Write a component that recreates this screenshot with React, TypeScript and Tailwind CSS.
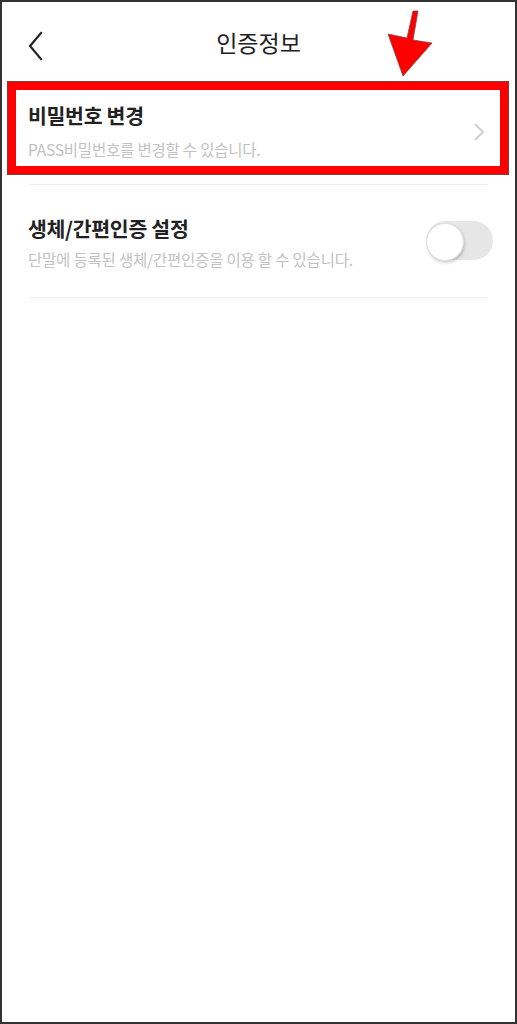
import React from "react";

export default function App() {
  const font = { fontFamily: '"Noto Sans CJK KR", "Noto Sans", sans-serif' };
  return (
    <div
      className="relative w-[517px] h-[1024px] bg-white border-2 border-[#333] overflow-hidden"
      style={font}
    >
      {/* Header */}
      <div className="relative flex items-center justify-center h-[82px]">
        <button className="absolute left-[24px] top-[28px] w-[20px] h-[32px] flex items-center justify-center">
          <svg width="16" height="30" viewBox="0 0 16 30" fill="none">
            <path d="M13 2 L2 15 L13 28" stroke="#222" strokeWidth="2.2" strokeLinecap="square" />
          </svg>
        </button>
        <h1 className="text-[23px] leading-none text-[#222] font-normal -mt-[1px]">인증정보</h1>
      </div>

      {/* Row 1 */}
      <div className="flex items-start justify-between pl-[26px] pr-[26px] pt-[17px] h-[100px]">
        <div className="flex flex-col">
          <div className="text-[20.5px] font-bold text-[#222] leading-[28px] tracking-[-0.3px]">비밀번호 변경</div>
          <div className="text-[15.5px] text-[#c2c2c2] leading-[22px] mt-[9px] tracking-[-0.2px]">PASS비밀번호를 변경할 수 있습니다.</div>
        </div>
        <svg width="12" height="20" viewBox="0 0 12 20" className="mr-[4px] mt-[21px]">
          <path d="M2 2 L10 10 L2 18" stroke="#cfcfcf" strokeWidth="2" fill="none" />
        </svg>
      </div>
      <div className="mx-[27px] border-t border-[#eeeeee]" />

      {/* Row 2 */}
      <div className="flex items-start justify-between pl-[26px] pr-[22px] pt-[29px] h-[112px]">
        <div className="flex flex-col">
          <div className="text-[20.5px] font-bold text-[#222] leading-[28px] tracking-[-0.3px]">생체/간편인증 설정</div>
          <div className="text-[15.5px] text-[#c2c2c2] leading-[22px] mt-[6px] tracking-[-0.2px]">단말에 등록된 생체/간편인증을 이용 할 수 있습니다.</div>
        </div>
        <div className="relative w-[67px] h-[39px] rounded-full bg-[#e6e6e6] mt-[7px]">
          <div className="absolute left-[0px] top-[2px] w-[38px] h-[38px] rounded-full bg-white border border-[#dedede] shadow-[1px_2px_3px_rgba(0,0,0,0.18)]" />
        </div>
      </div>
      <div className="mx-[27px] border-t border-[#eeeeee]" />

      {/* Annotation: red box */}
      <div className="absolute left-[6px] top-[80px] w-[500px] h-[92px] border-[8px] border-[#ff0000] outline outline-1 outline-[#8a3a3a]" />

      {/* Annotation: arrow */}
      <svg className="absolute left-[-2px] top-[-2px]" width="517" height="100" viewBox="0 0 517 100">
        <polygon
          points="413,11 418,11 413,40 432,43 403,76 388,34 407,38"
          fill="#ff0000"
          stroke="#7a4a4a"
          strokeWidth="0.8"
        />
      </svg>
    </div>
  );
}
